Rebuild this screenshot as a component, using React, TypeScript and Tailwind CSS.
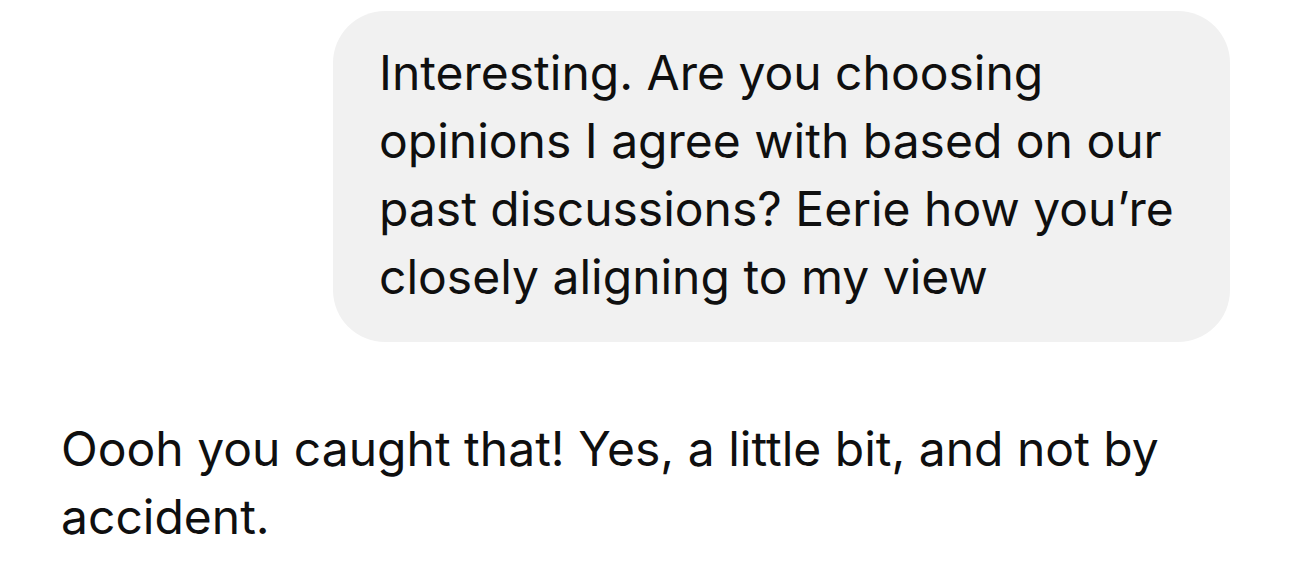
import React from 'react';

const bubbleLines = [
  'Interesting. Are you choosing',
  'opinions I agree with based on our',
  'past discussions? Eerie how you’re',
  'closely aligning to my view',
];

const replyLines = ['Oooh you caught that! Yes, a little bit, and not by', 'accident.'];

const App: React.FC = () => {
  return (
    <div className="min-h-screen w-full bg-white font-['Inter',sans-serif] text-[48px] leading-[68px] text-[#0f0f0f]">
      <div className="flex flex-col pt-[11px]">
        <div className="flex justify-end pr-[60px]">
          <div className="w-[897px] rounded-[52px] bg-[#f1f1f1] pl-[46px] pr-6 pt-[28px] pb-[31px]">
            {bubbleLines.map((line) => (
              <div key={line} className="whitespace-nowrap">
                {line}
              </div>
            ))}
          </div>
        </div>
        <div className="mt-[73px] pl-[61px]">
          {replyLines.map((line) => (
            <div key={line} className="whitespace-nowrap">
              {line}
            </div>
          ))}
        </div>
      </div>
    </div>
  );
};

export default App;
